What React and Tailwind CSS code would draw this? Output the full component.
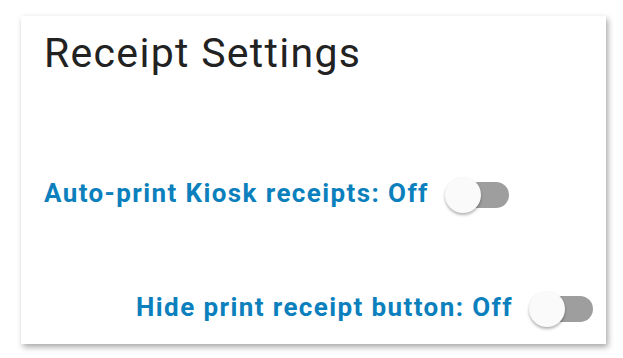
import React from 'react';

const Toggle = () => (
  <div className="relative w-[64px] h-[36px] shrink-0 mt-[4px]">
    <div className="absolute right-0 top-[5px] h-[26px] w-[50px] rounded-full bg-[#9e9e9e]" />
    <div className="absolute left-0 top-0 h-[36px] w-[36px] rounded-full bg-[#fafafa] shadow-[0_2px_3px_rgba(0,0,0,0.3)]" />
  </div>
);

const SettingRow = ({ label, className }) => (
  <div className={`flex items-center gap-[16px] ${className}`}>
    <span className="text-[26px] leading-[36px] font-bold text-[#0b80bd] tracking-[1.4px]">{label}</span>
    <Toggle />
  </div>
);

export default function App() {
  return (
    <div className="w-[623px] h-[358px] bg-white pt-[16px] pl-[21px]" style={{ fontFamily: 'Roboto, "Liberation Sans", sans-serif' }}>
      <div className="w-[585px] h-[328px] bg-white shadow-[2px_3px_6px_rgba(0,0,0,0.35)] flex flex-col">
        <h1 className="pl-[23px] pt-[7px] text-[41px] leading-[60px] text-[#222] tracking-[1.3px]">Receipt Settings</h1>
        <SettingRow label="Auto-print Kiosk receipts: Off" className="pl-[23px] mt-[90px]" />
        <SettingRow label="Hide print receipt button: Off" className="justify-end pr-[13px] mt-[74px]" />
      </div>
    </div>
  );
}
